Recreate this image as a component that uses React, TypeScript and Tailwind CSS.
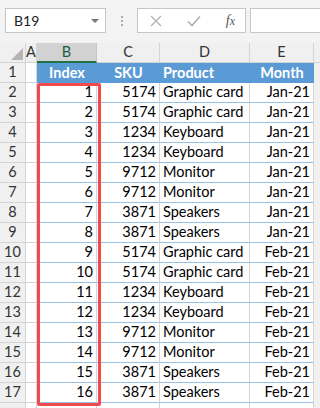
import React from 'react';

const rows = [
  [1, 5174, 'Graphic card', 'Jan-21'],
  [2, 5174, 'Graphic card', 'Jan-21'],
  [3, 1234, 'Keyboard', 'Jan-21'],
  [4, 1234, 'Keyboard', 'Jan-21'],
  [5, 9712, 'Monitor', 'Jan-21'],
  [6, 9712, 'Monitor', 'Jan-21'],
  [7, 3871, 'Speakers', 'Jan-21'],
  [8, 3871, 'Speakers', 'Jan-21'],
  [9, 5174, 'Graphic card', 'Feb-21'],
  [10, 5174, 'Graphic card', 'Feb-21'],
  [11, 1234, 'Keyboard', 'Feb-21'],
  [12, 1234, 'Keyboard', 'Feb-21'],
  [13, 9712, 'Monitor', 'Feb-21'],
  [14, 9712, 'Monitor', 'Feb-21'],
  [15, 3871, 'Speakers', 'Feb-21'],
  [16, 3871, 'Speakers', 'Feb-21'],
] as const;

const rowHead = 'h-5 flex items-center justify-center bg-[#f0f0f0] border-r border-b border-[#d4d4d4] text-[#333]';
const cell = 'h-5 flex items-center px-[3px] bg-white border-r border-b border-[#d4d4d4]';
const tcell = 'h-5 flex items-center px-[3px] bg-white border-r border-[#d4d4d4] border-b border-b-[#9bc2e6] text-black';

function Toolbar() {
  return (
    <div className="h-[43px] bg-[#f3f3f3] flex items-start pt-2 pl-[5px] gap-0">
      <div className="w-[101px] h-[25px] bg-white border border-[#c6c6c6] flex items-center justify-between pl-2 pr-[6px] text-[14px] text-[#222]">
        <span>B19</span>
        <span className="w-0 h-0 border-l-[4px] border-r-[4px] border-t-[4px] border-l-transparent border-r-transparent border-t-[#777]" />
      </div>
      <div className="w-[31px] h-[25px] flex flex-col items-center justify-center gap-[2px]">
        <span className="w-[2px] h-[2px] bg-[#aaa]" />
        <span className="w-[2px] h-[2px] bg-[#aaa]" />
        <span className="w-[2px] h-[2px] bg-[#aaa]" />
      </div>
      <div className="w-[109px] h-[25px] bg-white border border-[#c6c6c6] flex items-center justify-between pl-[12px] pr-[10px]">
        <svg width="12" height="12" viewBox="0 0 12 12">
          <path d="M1 1L11 11M11 1L1 11" stroke="#b0b0b0" strokeWidth="1.3" fill="none" />
        </svg>
        <svg width="14" height="12" viewBox="0 0 14 12">
          <path d="M1 6.5L5 10.5L13 1.5" stroke="#b0b0b0" strokeWidth="1.6" fill="none" />
        </svg>
        <span className="italic text-[#555] text-[14px] leading-none" style={{ fontFamily: '"Liberation Serif", serif' }}>
          f<span className="text-[12px]">x</span>
        </span>
      </div>
      <div className="ml-[4px] flex-1 h-[25px] bg-white border border-[#c6c6c6] border-r-0" />
    </div>
  );
}

export default function App() {
  return (
    <div className="w-[320px] h-[408px] overflow-hidden bg-white text-[14.5px] leading-none" style={{ fontFamily: 'Lato, "Noto Sans", sans-serif' }}>
      <Toolbar />
      <div className="relative">
        <div className="grid grid-cols-[26px_11px_60px_63px_90px_64px_1fr]">
          {/* column headers */}
          <div className="h-5 bg-[#f0f0f0] border-r border-b border-[#d4d4d4] flex items-end justify-end pr-[2px] pb-[2px]">
            <span className="w-0 h-0" style={{ borderBottom: '12px solid #b4b4b4', borderLeft: '12px solid transparent' }} />
          </div>
          <div className="h-5 bg-[#f0f0f0] border-r border-b border-[#d4d4d4] flex items-center justify-center text-[#333]">A</div>
          <div className="h-5 bg-[#d2d2d2] border-r border-[#c6c6c6] border-b-2 border-b-[#217346] flex items-center justify-center text-[#1e5f3b]">B</div>
          <div className="h-5 bg-[#f0f0f0] border-r border-b border-[#d4d4d4] flex items-center justify-center text-[#333]">C</div>
          <div className="h-5 bg-[#f0f0f0] border-r border-b border-[#d4d4d4] flex items-center justify-center text-[#333]">D</div>
          <div className="h-5 bg-[#f0f0f0] border-r border-b border-[#d4d4d4] flex items-center justify-center text-[#333]">E</div>
          <div className="h-5 bg-[#f0f0f0] border-b border-[#d4d4d4]" />

          {/* row 1: table header */}
          <div className={rowHead}>1</div>
          <div className={cell} />
          <div className="h-5 bg-[#5b9bd5] flex items-center justify-center text-white font-bold">Index</div>
          <div className="h-5 bg-[#5b9bd5] flex items-center justify-center text-white font-bold">SKU</div>
          <div className="h-5 bg-[#5b9bd5] flex items-center px-[3px] text-white font-bold">Product</div>
          <div className="h-5 bg-[#5b9bd5] flex items-center justify-center text-white font-bold">Month</div>
          <div className="h-5 bg-[#f0f0f0]" />

          {rows.map((r, i) => (
            <React.Fragment key={i}>
              <div className={rowHead}>{i + 2}</div>
              <div className={cell} />
              <div className={tcell + ' justify-end'}>{r[0]}</div>
              <div className={tcell + ' justify-end'}>{r[1]}</div>
              <div className={tcell}>{r[2]}</div>
              <div className={tcell + ' justify-end'}>{r[3]}</div>
              <div className="h-5 bg-[#f0f0f0]" />
            </React.Fragment>
          ))}

          <div className={rowHead} />
          <div className={cell} />
          <div className={cell} />
          <div className={cell} />
          <div className={cell} />
          <div className={cell} />
          <div className="h-5 bg-[#f0f0f0]" />
        </div>
        <div className="absolute left-[37px] top-[40px] w-[64px] h-[323px] border-[3px] border-[#f04a4f] rounded-[2px]" />
      </div>
    </div>
  );
}
